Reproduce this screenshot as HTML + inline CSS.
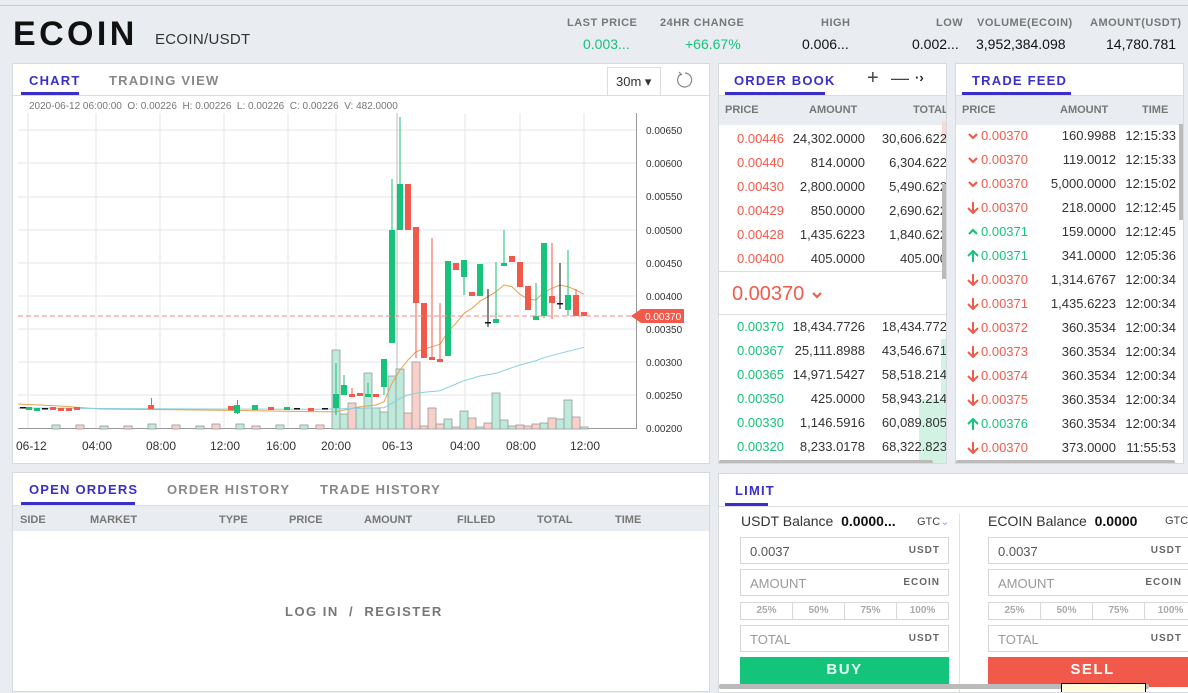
<!DOCTYPE html>
<html><head><meta charset="utf-8"><style>
*{margin:0;padding:0;box-sizing:border-box}
body{width:1188px;height:688px;overflow:hidden;background:#e9ecf1;font-family:"Liberation Sans",sans-serif;position:relative;color:#333}
.a{position:absolute;white-space:nowrap}
.p{position:absolute;background:#fff;border:1px solid #d6d9de;overflow:hidden}
.tab{position:absolute;font-weight:bold;font-size:13px;letter-spacing:1.2px;color:#888}
.tab.on{color:#3b2fc9}
.ul{position:absolute;height:3px;background:#3b2fc9}
.hd{font-size:11px;font-weight:bold;color:#777}
.r{color:#f15a4a}.g{color:#17c27a}
.row{position:absolute;left:0;width:100%;height:24px;font-size:13px;color:#333}
.row span{position:absolute;top:4px;text-align:right}
.row svg{position:absolute;left:11px;top:6px}
.inp{position:absolute;border:1px solid #d8d8d8;height:27px;font-size:13px;color:#555}
.inp i{position:absolute;right:8px;top:7px;font-style:normal;font-size:10px;font-weight:bold;letter-spacing:1px;color:#666}
.inp b{position:absolute;left:9px;top:6px;font-weight:normal}
.pct{position:absolute;height:18px;border:1px solid #d8d8d8;font-size:10px;color:#aaa;text-align:center;line-height:16px;font-weight:bold}
</style></head><body>
<svg width="0" height="0" style="position:absolute"><defs>
<symbol id="cd" viewBox="0 0 12 12"><path d="M2 4 L6 8 L10 4" fill="none" stroke="#f15a4a" stroke-width="2.2"/></symbol>
<symbol id="cu" viewBox="0 0 12 12"><path d="M2 8 L6 4 L10 8" fill="none" stroke="#17c27a" stroke-width="2.2"/></symbol>
<symbol id="ad" viewBox="0 0 12 12"><path d="M6 0 V11 M1 6 L6 11 L11 6" fill="none" stroke="#f15a4a" stroke-width="2"/></symbol>
<symbol id="au" viewBox="0 0 12 12"><path d="M6 12 V1 M1 6 L6 1 L11 6" fill="none" stroke="#17c27a" stroke-width="2"/></symbol>
</defs></svg>
<div class="a" style="left:0;top:5px;width:1188px;height:1px;background:#c8ccd2"></div>
<div class="a" style="left:13px;top:15px;font-size:34px;font-weight:bold;letter-spacing:3.4px;color:#111">ECOIN</div>
<div class="a" style="left:155px;top:31px;font-size:15px;color:#333;letter-spacing:.3px">ECOIN/USDT</div>
<div class="a hd" style="left:567px;top:17px;letter-spacing:.5px">LAST PRICE</div>
<div class="a g" style="left:583px;top:36px;font-size:14px">0.003...</div>
<div class="a hd" style="left:660px;top:17px;letter-spacing:.5px">24HR CHANGE</div>
<div class="a g" style="left:685px;top:36px;font-size:14px">+66.67%</div>
<div class="a hd" style="left:821px;top:17px;letter-spacing:.5px">HIGH</div>
<div class="a" style="left:802px;top:36px;font-size:14px;color:#111">0.006...</div>
<div class="a hd" style="left:936px;top:17px;letter-spacing:.5px">LOW</div>
<div class="a" style="left:912px;top:36px;font-size:14px;color:#111">0.002...</div>
<div class="a hd" style="left:977px;top:17px;letter-spacing:.5px">VOLUME(ECOIN)</div>
<div class="a" style="left:976px;top:36px;font-size:14px;color:#111">3,952,384.098</div>
<div class="a hd" style="left:1090px;top:17px;letter-spacing:.5px">AMOUNT(USDT)</div>
<div class="a" style="left:1106px;top:36px;font-size:14px;color:#111">14,780.781</div>

<!-- Chart panel -->
<div class="p" style="left:12px;top:63px;width:698px;height:401px">
<div class="tab on" style="left:16px;top:9px">CHART</div>
<div class="ul" style="left:8px;top:28px;width:58px"></div>
<div class="tab" style="left:96px;top:9px">TRADING VIEW</div>
<div class="a" style="left:0;top:31px;width:698px;height:1px;background:#ddd"></div>
<div class="a" style="left:594px;top:3px;width:54px;height:29px;border:1px solid #ddd;font-size:13px;padding:6px 0 0 8px">30m &#9662;</div>
<svg class="a" style="left:662px;top:6px" width="20" height="20" viewBox="0 0 20 20"><path d="M6 4 A7 7 0 1 0 10 3" fill="none" stroke="#888" stroke-width="1.2"/><path d="M4 2 L6.5 4.5 L3.5 5.5" fill="none" stroke="#888" stroke-width="1.2"/></svg>
<div class="a" style="left:16px;top:37px;font-size:10px;color:#777">2020-06-12 06:00:00&nbsp; O: 0.00226&nbsp; H: 0.00226&nbsp; L: 0.00226&nbsp; C: 0.00226&nbsp; V: 482.0000</div>
</div>
<svg class="a" style="left:0;top:0" width="710" height="464" viewBox="0 0 710 464" font-family="Liberation Sans" font-size="10" fill="#333">
<g stroke="#e6e6e6" stroke-width="1">
<line x1="18" y1="130" x2="636" y2="130"/><line x1="18" y1="163" x2="636" y2="163"/><line x1="18" y1="197" x2="636" y2="197"/><line x1="18" y1="230" x2="636" y2="230"/><line x1="18" y1="263" x2="636" y2="263"/><line x1="18" y1="296" x2="636" y2="296"/><line x1="18" y1="329" x2="636" y2="329"/><line x1="18" y1="362" x2="636" y2="362"/><line x1="18" y1="395" x2="636" y2="395"/>
<line x1="28" y1="113" x2="28" y2="428"/><line x1="96" y1="113" x2="96" y2="428"/><line x1="160" y1="113" x2="160" y2="428"/><line x1="224" y1="113" x2="224" y2="428"/><line x1="288" y1="113" x2="288" y2="428"/><line x1="336" y1="113" x2="336" y2="428"/><line x1="465" y1="113" x2="465" y2="428"/><line x1="520" y1="113" x2="520" y2="428"/><line x1="584" y1="113" x2="584" y2="428"/>
</g>
<line x1="397" y1="113" x2="397" y2="428" stroke="#bbb"/>
<line x1="18" y1="428.5" x2="637" y2="428.5" stroke="#999"/>
<line x1="636.5" y1="113" x2="636.5" y2="429" stroke="#999"/>
<g font-size="10" fill="#333">
<text x="646" y="134">0.00650</text><text x="646" y="167">0.00600</text><text x="646" y="200">0.00550</text><text x="646" y="234">0.00500</text><text x="646" y="267">0.00450</text><text x="646" y="300">0.00400</text><text x="646" y="333">0.00350</text><text x="646" y="366">0.00300</text><text x="646" y="399">0.00250</text><text x="646" y="432">0.00200</text>
</g>
<g font-size="12" fill="#333">
<text x="16" y="450">06-12</text><text x="82" y="450">04:00</text><text x="146" y="450">08:00</text><text x="210" y="450">12:00</text><text x="266" y="450">16:00</text><text x="321" y="450">20:00</text><text x="382" y="450">06-13</text><text x="450" y="450">04:00</text><text x="506" y="450">08:00</text><text x="570" y="450">12:00</text>
</g>
<g stroke="#999" stroke-width="0.8">
<g fill="#bdeadb">
<rect x="332" y="350" width="8" height="79"/><rect x="340" y="414" width="8" height="15"/><rect x="356" y="408" width="8" height="21"/><rect x="364" y="373" width="8" height="56"/><rect x="372" y="408" width="8" height="21"/><rect x="380" y="412" width="8" height="17"/><rect x="388" y="376" width="8" height="53"/><rect x="396" y="369" width="8" height="60"/><rect x="444" y="419" width="8" height="10"/><rect x="460" y="411" width="8" height="18"/><rect x="476" y="427" width="8" height="2"/><rect x="492" y="393" width="8" height="36"/><rect x="500" y="420" width="8" height="9"/><rect x="508" y="426" width="8" height="3"/><rect x="540" y="423" width="8" height="6"/><rect x="556" y="419" width="8" height="10"/><rect x="564" y="400" width="8" height="29"/><rect x="580" y="427" width="8" height="2"/>
</g>
<g fill="#f9cfca">
<rect x="348" y="403" width="8" height="26"/><rect x="404" y="413" width="8" height="16"/><rect x="412" y="362" width="8" height="67"/><rect x="420" y="426" width="8" height="3"/><rect x="428" y="408" width="8" height="21"/><rect x="436" y="424" width="8" height="5"/><rect x="452" y="427" width="8" height="2"/><rect x="468" y="418" width="8" height="11"/><rect x="484" y="423" width="8" height="6"/><rect x="516" y="425" width="8" height="4"/><rect x="524" y="426" width="8" height="3"/><rect x="532" y="424" width="8" height="5"/><rect x="548" y="418" width="8" height="11"/><rect x="572" y="417" width="8" height="12"/>
</g>
<g fill="#bdeadb"><rect x="52" y="425" width="8" height="4"/><rect x="100" y="426" width="8" height="3"/><rect x="148" y="424" width="8" height="5"/><rect x="196" y="426" width="8" height="3"/><rect x="236" y="424" width="8" height="5"/><rect x="276" y="425" width="8" height="4"/><rect x="300" y="425" width="8" height="4"/></g>
<g fill="#f9cfca"><rect x="76" y="425" width="8" height="4"/><rect x="124" y="426" width="8" height="3"/><rect x="172" y="425" width="8" height="4"/><rect x="212" y="424" width="8" height="5"/><rect x="252" y="426" width="8" height="3"/><rect x="316" y="425" width="8" height="4"/></g>
</g>
<polyline fill="none" stroke="#e8a050" stroke-width="1" points="18,404 60,406 100,409 200,410 320,411.7 336,411.7 360,406.7 376,405 384,401.7 392,383.3 400,370 408,360 416,351.7 432,346.7 440,344.3 448,331.7 456,323.3 464,313.3 472,308.3 480,301 488,296.7 496,291.7 504,285 512,286.7 520,294.3 528,299.3 536,300 544,292 552,288.3 560,285 568,286.7 576,290 584,294.3"/>
<polyline fill="none" stroke="#88cfdc" stroke-width="1" points="18,408 200,409 320,409.3 384,407.7 392,403.3 400,398.3 408,395 416,393.3 424,392.3 440,390.7 448,387.3 464,380.7 480,376 496,373.3 512,367.7 520,365 536,360.7 544,357.7 560,353.3 584,347.3"/>
<g fill="#f15a4a"><rect x="50" y="407" width="6" height="3"/><rect x="58" y="408" width="6" height="3"/><rect x="66" y="408" width="6" height="3"/><rect x="74" y="407" width="6" height="3"/><rect x="148" y="405" width="6" height="4"/><rect x="228" y="406" width="6" height="4"/><rect x="268" y="407" width="6" height="3"/><rect x="308" y="408" width="6" height="3"/><rect x="151" y="398" width="1" height="8"/></g>
<g fill="#17c27a"><rect x="26" y="407" width="6" height="3"/><rect x="34" y="408" width="6" height="3"/><rect x="234" y="405" width="6" height="8"/><rect x="252" y="405" width="6" height="5"/><rect x="284" y="407" width="6" height="3"/><rect x="237" y="400" width="1" height="14"/></g>
<g fill="#111"><rect x="20" y="407" width="6" height="1.5"/><rect x="42" y="408" width="6" height="1.5"/><rect x="294" y="408" width="6" height="1.5"/><rect x="322" y="408" width="6" height="1.5"/></g>
<g fill="#17c27a" stroke="none">
<rect x="335.5" y="363" width="1" height="52"/><rect x="333" y="394" width="6" height="14"/>
<rect x="343.5" y="375" width="1" height="20"/><rect x="341" y="385" width="6" height="10"/>
<rect x="367.5" y="383" width="1" height="14"/><rect x="365" y="394" width="6" height="3"/>
<rect x="383.5" y="359" width="1" height="36"/><rect x="381" y="359" width="6" height="28"/>
<rect x="391.5" y="179" width="1" height="164"/><rect x="389" y="230" width="6" height="113"/>
<rect x="399.5" y="117" width="1" height="113"/><rect x="397" y="184" width="6" height="46"/>
<rect x="445" y="261" width="6" height="95"/>
<rect x="463.5" y="260" width="1" height="35"/><rect x="461" y="260" width="6" height="17"/>
<rect x="477" y="264" width="6" height="32"/>
<rect x="495.5" y="262" width="1" height="61"/><rect x="493" y="319" width="6" height="4"/>
<rect x="503.5" y="230" width="1" height="36"/><rect x="501" y="263" width="6" height="3"/>
<rect x="535.5" y="283" width="1" height="37"/><rect x="533" y="316" width="6" height="4"/>
<rect x="541" y="243" width="6" height="73"/><rect x="543.5" y="243" width="1" height="75"/>
<rect x="567.5" y="250" width="1" height="66"/><rect x="565" y="295" width="6" height="15"/>
</g>
<g fill="#f15a4a">
<rect x="349" y="394" width="6" height="3"/><rect x="351.5" y="388" width="1" height="9"/>
<rect x="357" y="393" width="6" height="3"/><rect x="373" y="394" width="6" height="3"/>
<rect x="405" y="184" width="6" height="46"/>
<rect x="415.5" y="227" width="1" height="131"/><rect x="413" y="227" width="6" height="76"/>
<rect x="421" y="303" width="6" height="55"/>
<rect x="431.5" y="238" width="1" height="122"/><rect x="429" y="357" width="6" height="3"/>
<rect x="439.5" y="303" width="1" height="59"/><rect x="437" y="359" width="6" height="3"/>
<rect x="453" y="263" width="6" height="7"/>
<rect x="469" y="292" width="6" height="4"/>
<rect x="509" y="256" width="6" height="6"/>
<rect x="517" y="262" width="6" height="25"/>
<rect x="525" y="286" width="6" height="24"/>
<rect x="551.5" y="243" width="1" height="76"/><rect x="549" y="296" width="6" height="7"/>
<rect x="575.5" y="289" width="1" height="27"/><rect x="573" y="295" width="6" height="21"/>
<rect x="581" y="312" width="6" height="4"/>
</g>
<g fill="#111"><rect x="487.5" y="289" width="1" height="38"/><rect x="485" y="322" width="6" height="1.5"/><rect x="559.5" y="263" width="1" height="46"/><rect x="557" y="303" width="6" height="1.5"/></g>
<line x1="18" y1="316" x2="636" y2="316" stroke="#f28b80" stroke-dasharray="5,3"/>
<path d="M631 316 L641 309 L684 309 L684 323 L641 323 Z" fill="#f15a4a"/>
<text x="645" y="320" fill="#fff" font-size="10">0.00370</text>
</svg>

<!-- Order book -->
<div class="p" style="left:718px;top:63px;width:229px;height:401px">
<div class="tab on" style="left:15px;top:9px">ORDER BOOK</div>
<div class="ul" style="left:6px;top:28px;width:100px"></div>
<div class="a" style="left:148px;top:3px;font-size:20px;color:#444">+</div>
<div class="a" style="left:172px;top:4px;font-size:18px;color:#444">&#8212;</div>
<div class="a" style="left:196px;top:6px;font-size:13px;color:#222;font-weight:bold">&middot;&rsaquo;</div>
<div class="a" style="left:0;top:31px;width:229px;height:30px;background:#e9ecf1;border-top:1px solid #ddd"></div>
<div class="a hd" style="left:6px;top:40px">PRICE</div>
<div class="a hd" style="left:90px;top:40px">AMOUNT</div>
<div class="a hd" style="left:194px;top:40px">TOTAL</div>
<div class="a" style="left:223px;top:57px;width:6px;height:22px;background:#fbd9d5"></div>
<div class="row" style="top:63px"><span class="r" style="left:0;width:65px">0.00446</span><span style="left:70px;width:76px">24,302.0000</span><span style="left:150px;width:78px">30,606.622</span></div>
<div class="row" style="top:87px"><span class="r" style="left:0;width:65px">0.00440</span><span style="left:70px;width:76px">814.0000</span><span style="left:150px;width:78px">6,304.622</span></div>
<div class="row" style="top:111px"><span class="r" style="left:0;width:65px">0.00430</span><span style="left:70px;width:76px">2,800.0000</span><span style="left:150px;width:78px">5,490.622</span></div>
<div class="row" style="top:135px"><span class="r" style="left:0;width:65px">0.00429</span><span style="left:70px;width:76px">850.0000</span><span style="left:150px;width:78px">2,690.622</span></div>
<div class="row" style="top:159px"><span class="r" style="left:0;width:65px">0.00428</span><span style="left:70px;width:76px">1,435.6223</span><span style="left:150px;width:78px">1,840.622</span></div>
<div class="row" style="top:183px"><span class="r" style="left:0;width:65px">0.00400</span><span style="left:70px;width:76px">405.0000</span><span style="left:150px;width:78px">405.000</span></div>
<div class="a" style="left:0;top:207px;width:229px;height:1px;background:#ddd"></div>
<div class="a r" style="left:13px;top:219px;font-size:20px">0.00370</div>
<svg class="a" style="left:92px;top:225px" width="12" height="12"><use href="#cd"/></svg>
<div class="a" style="left:0;top:250px;width:229px;height:1px;background:#ddd"></div>
<div class="a" style="left:223px;top:120px;width:4px;height:95px;background:#bbb"></div>
<div class="a" style="left:222px;top:275px;width:7px;height:126px;background:#d2f2e4"></div>
<div class="a" style="left:200px;top:335px;width:29px;height:66px;background:#d2f2e4"></div>
<div class="row" style="top:251px"><span class="g" style="left:0;width:65px">0.00370</span><span style="left:70px;width:76px">18,434.7726</span><span style="left:150px;width:78px">18,434.772</span></div>
<div class="row" style="top:275px"><span class="g" style="left:0;width:65px">0.00367</span><span style="left:70px;width:76px">25,111.8988</span><span style="left:150px;width:78px">43,546.671</span></div>
<div class="row" style="top:299px"><span class="g" style="left:0;width:65px">0.00365</span><span style="left:70px;width:76px">14,971.5427</span><span style="left:150px;width:78px">58,518.214</span></div>
<div class="row" style="top:323px"><span class="g" style="left:0;width:65px">0.00350</span><span style="left:70px;width:76px">425.0000</span><span style="left:150px;width:78px">58,943.214</span></div>
<div class="row" style="top:347px"><span class="g" style="left:0;width:65px">0.00330</span><span style="left:70px;width:76px">1,146.5916</span><span style="left:150px;width:78px">60,089.805</span></div>
<div class="row" style="top:371px"><span class="g" style="left:0;width:65px">0.00320</span><span style="left:70px;width:76px">8,233.0178</span><span style="left:150px;width:78px">68,322.823</span></div>
<div class="a" style="left:0;top:396px;width:214px;height:5px;background:#bbb;border-radius:2px"></div>
</div>

<!-- Trade feed -->
<div class="p" style="left:955px;top:63px;width:229px;height:401px">
<div class="tab on" style="left:16px;top:9px">TRADE FEED</div>
<div class="ul" style="left:6px;top:28px;width:109px"></div>
<div class="a" style="left:0;top:31px;width:229px;height:30px;background:#e9ecf1;border-top:1px solid #ddd"></div>
<div class="a hd" style="left:6px;top:40px">PRICE</div>
<div class="a hd" style="left:104px;top:40px">AMOUNT</div>
<div class="a hd" style="left:186px;top:40px">TIME</div>
<div class="a" style="left:223px;top:60px;width:4px;height:96px;background:#bbb"></div>
<div class="row" style="top:60px"><svg width="12" height="12"><use href="#cd"/></svg><span class="r" style="left:25px;width:60px;text-align:left">0.00370</span><span style="left:90px;width:70px">160.9988</span><span style="left:160px;width:60px">12:15:33</span></div>
<div class="row" style="top:84px"><svg width="12" height="12"><use href="#cd"/></svg><span class="r" style="left:25px;width:60px;text-align:left">0.00370</span><span style="left:90px;width:70px">119.0012</span><span style="left:160px;width:60px">12:15:33</span></div>
<div class="row" style="top:108px"><svg width="12" height="12"><use href="#cd"/></svg><span class="r" style="left:25px;width:60px;text-align:left">0.00370</span><span style="left:90px;width:70px">5,000.0000</span><span style="left:160px;width:60px">12:15:02</span></div>
<div class="row" style="top:132px"><svg width="12" height="12"><use href="#ad"/></svg><span class="r" style="left:25px;width:60px;text-align:left">0.00370</span><span style="left:90px;width:70px">218.0000</span><span style="left:160px;width:60px">12:12:45</span></div>
<div class="row" style="top:156px"><svg width="12" height="12"><use href="#cu"/></svg><span class="g" style="left:25px;width:60px;text-align:left">0.00371</span><span style="left:90px;width:70px">159.0000</span><span style="left:160px;width:60px">12:12:45</span></div>
<div class="row" style="top:180px"><svg width="12" height="12"><use href="#au"/></svg><span class="g" style="left:25px;width:60px;text-align:left">0.00371</span><span style="left:90px;width:70px">341.0000</span><span style="left:160px;width:60px">12:05:36</span></div>
<div class="row" style="top:204px"><svg width="12" height="12"><use href="#ad"/></svg><span class="r" style="left:25px;width:60px;text-align:left">0.00370</span><span style="left:90px;width:70px">1,314.6767</span><span style="left:160px;width:60px">12:00:34</span></div>
<div class="row" style="top:228px"><svg width="12" height="12"><use href="#ad"/></svg><span class="r" style="left:25px;width:60px;text-align:left">0.00371</span><span style="left:90px;width:70px">1,435.6223</span><span style="left:160px;width:60px">12:00:34</span></div>
<div class="row" style="top:252px"><svg width="12" height="12"><use href="#ad"/></svg><span class="r" style="left:25px;width:60px;text-align:left">0.00372</span><span style="left:90px;width:70px">360.3534</span><span style="left:160px;width:60px">12:00:34</span></div>
<div class="row" style="top:276px"><svg width="12" height="12"><use href="#ad"/></svg><span class="r" style="left:25px;width:60px;text-align:left">0.00373</span><span style="left:90px;width:70px">360.3534</span><span style="left:160px;width:60px">12:00:34</span></div>
<div class="row" style="top:300px"><svg width="12" height="12"><use href="#ad"/></svg><span class="r" style="left:25px;width:60px;text-align:left">0.00374</span><span style="left:90px;width:70px">360.3534</span><span style="left:160px;width:60px">12:00:34</span></div>
<div class="row" style="top:324px"><svg width="12" height="12"><use href="#ad"/></svg><span class="r" style="left:25px;width:60px;text-align:left">0.00375</span><span style="left:90px;width:70px">360.3534</span><span style="left:160px;width:60px">12:00:34</span></div>
<div class="row" style="top:348px"><svg width="12" height="12"><use href="#au"/></svg><span class="g" style="left:25px;width:60px;text-align:left">0.00376</span><span style="left:90px;width:70px">360.3534</span><span style="left:160px;width:60px">12:00:34</span></div>
<div class="row" style="top:372px"><svg width="12" height="12"><use href="#ad"/></svg><span class="r" style="left:25px;width:60px;text-align:left">0.00370</span><span style="left:90px;width:70px">373.0000</span><span style="left:160px;width:60px">11:55:53</span></div>
<div class="a" style="left:0;top:396px;width:219px;height:5px;background:#bbb;border-radius:2px"></div>
</div>

<!-- Open orders -->
<div class="p" style="left:12px;top:472px;width:698px;height:220px">
<div class="tab on" style="left:16px;top:9px">OPEN ORDERS</div>
<div class="ul" style="left:8px;top:29px;width:114px"></div>
<div class="tab" style="left:154px;top:9px">ORDER HISTORY</div>
<div class="tab" style="left:307px;top:9px">TRADE HISTORY</div>
<div class="a" style="left:0;top:32px;width:698px;height:26px;background:#e9ecf1;border-top:1px solid #ddd"></div>
<div class="a hd" style="left:7px;top:41px">SIDE</div>
<div class="a hd" style="left:77px;top:41px">MARKET</div>
<div class="a hd" style="left:206px;top:41px">TYPE</div>
<div class="a hd" style="left:276px;top:41px">PRICE</div>
<div class="a hd" style="left:351px;top:41px">AMOUNT</div>
<div class="a hd" style="left:444px;top:41px">FILLED</div>
<div class="a hd" style="left:524px;top:41px">TOTAL</div>
<div class="a hd" style="left:602px;top:41px">TIME</div>
<div class="a" style="left:272px;top:131px;font-size:13px;font-weight:bold;letter-spacing:1.5px;color:#777">LOG IN &nbsp;/&nbsp; REGISTER</div>
</div>

<!-- Limit -->
<div class="p" style="left:718px;top:473px;width:470px;height:220px;border-right:none">
<div class="tab on" style="left:16px;top:9px">LIMIT</div>
<div class="ul" style="left:6px;top:29px;width:43px"></div>
<div class="a" style="left:0;top:32px;width:470px;height:1px;background:#ddd"></div>
<div class="a" style="left:240px;top:40px;width:1px;height:180px;background:#e2e2e2"></div>
<div class="a" style="left:22px;top:39px;font-size:14px;color:#333">USDT Balance &nbsp;<b style="color:#111">0.0000...</b></div>
<div class="a" style="left:198px;top:41px;font-size:11px;color:#444">GTC<span style="color:#99f">&#8964;</span></div>
<div class="inp" style="left:21px;top:63px;width:209px"><b>0.0037</b><i>USDT</i></div>
<div class="inp" style="left:21px;top:95px;width:209px"><b style="color:#999">AMOUNT</b><i>ECOIN</i></div>
<div class="pct" style="left:21px;top:128px;width:53px">25%</div><div class="pct" style="left:73px;top:128px;width:53px">50%</div><div class="pct" style="left:125px;top:128px;width:53px">75%</div><div class="pct" style="left:177px;top:128px;width:53px">100%</div>
<div class="inp" style="left:21px;top:151px;width:209px"><b style="color:#999">TOTAL</b><i>USDT</i></div>
<div class="a" style="left:21px;top:183px;width:209px;height:30px;background:#14c47b;color:#e8fff4;font-weight:bold;font-size:15px;letter-spacing:1.5px;text-align:center;line-height:26px">BUY</div>
<div class="a" style="left:269px;top:39px;font-size:14px;color:#333">ECOIN Balance &nbsp;<b style="color:#111">0.0000</b></div>
<div class="a" style="left:446px;top:41px;font-size:11px;color:#444">GTC</div>
<div class="inp" style="left:269px;top:63px;width:209px"><b>0.0037</b><i style="right:14px">USDT</i></div>
<div class="inp" style="left:269px;top:95px;width:209px"><b style="color:#999">AMOUNT</b><i style="right:14px">ECOIN</i></div>
<div class="pct" style="left:269px;top:128px;width:53px">25%</div><div class="pct" style="left:321px;top:128px;width:53px">50%</div><div class="pct" style="left:373px;top:128px;width:53px">75%</div><div class="pct" style="left:425px;top:128px;width:53px">100%</div>
<div class="inp" style="left:269px;top:151px;width:209px"><b style="color:#999">TOTAL</b><i style="right:14px">USDT</i></div>
<div class="a" style="left:269px;top:183px;width:209px;height:30px;background:#f15a4a;color:#fff;font-weight:bold;font-size:15px;letter-spacing:1.5px;text-align:center;line-height:26px">SELL</div>
<div class="a" style="left:0;top:210px;width:430px;height:5px;background:#bbb;border-radius:2px"></div>
<div class="a" style="left:342px;top:209px;width:85px;height:10px;background:#ffffe0;border:1px solid #000"></div>
</div>
</body></html>
